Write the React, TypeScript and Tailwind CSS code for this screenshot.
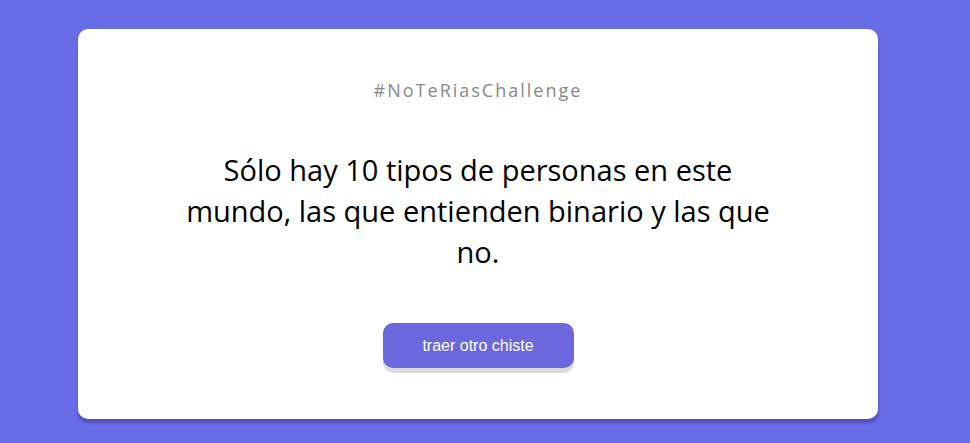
export default function App() {
  return (
    <div className="min-h-screen w-full bg-[#686ce6] pt-[29px] pb-[40px]">
      <div className="ml-[78px] flex w-[800px] flex-col items-center rounded-[10px] bg-white pt-[49px] pb-[51px] shadow-[0_4px_3px_rgba(40,40,120,0.4)]">
        <h1 className="font-['Open_Sans',sans-serif] text-[18px] leading-[24px] tracking-[2px] text-[#888]">
          #NoTeRiasChallenge
        </h1>
        <p className="mt-[47px] w-[600px] text-center font-['Open_Sans',sans-serif] text-[29px] leading-[41px] text-black">
          Sólo hay 10 tipos de personas en este mundo, las que entienden binario y las que no.
        </p>
        <button className="mt-[51px] h-[45px] w-[191px] rounded-[10px] bg-[#6c67dd] font-['Liberation_Sans',sans-serif] text-[16px] text-white shadow-[0_5px_0_#dcdcdc]">
          traer otro chiste
        </button>
      </div>
    </div>
  );
}
